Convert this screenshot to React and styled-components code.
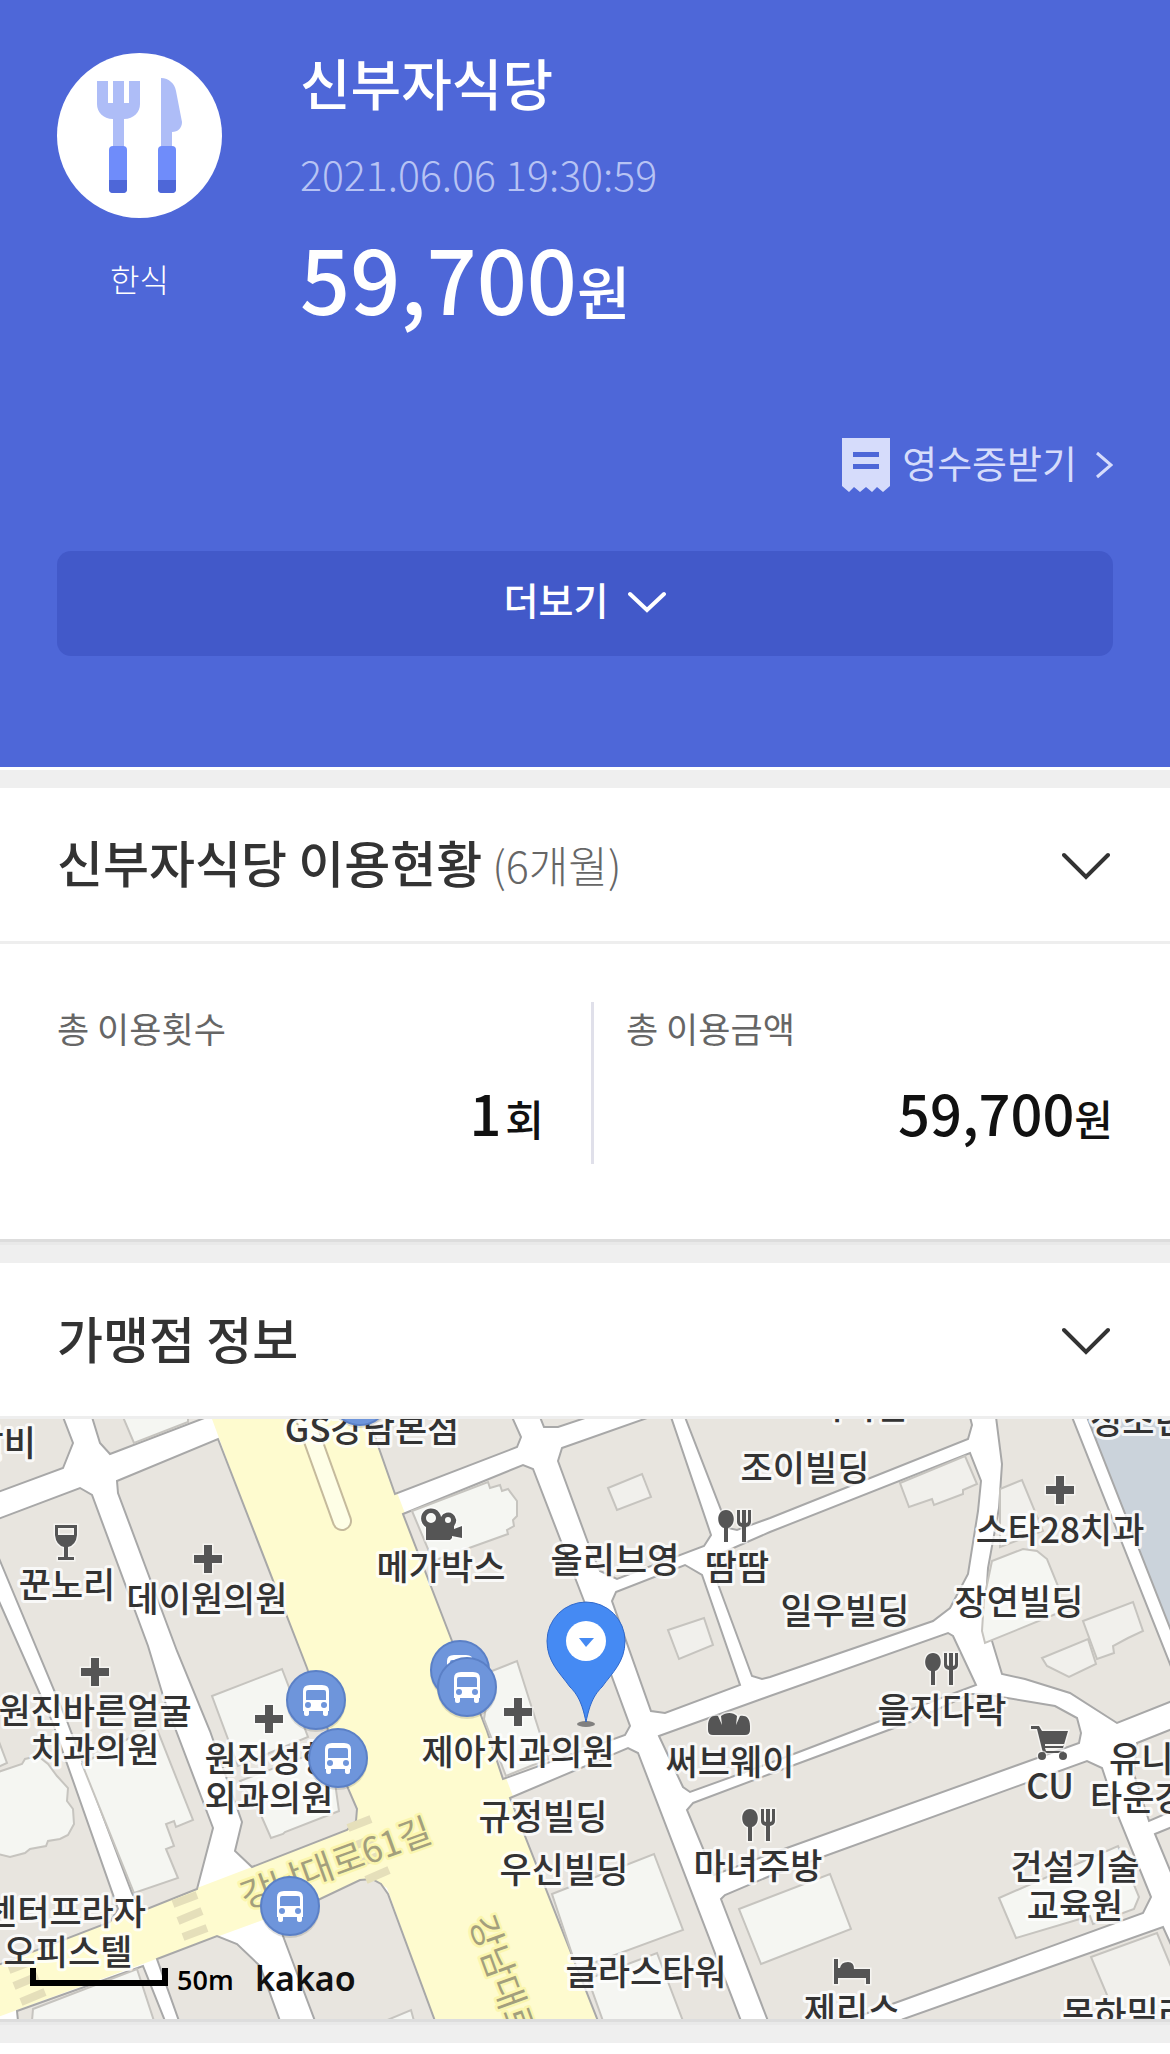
import React, { useState } from 'react';
import styled, { createGlobalStyle } from 'styled-components';

const GlobalStyle = createGlobalStyle`
  * {
    box-sizing: border-box;
  }

  body {
    margin: 0;
    background: #efefef;
    color: #333;
    font-family: 'Noto Sans CJK KR', 'Noto Sans', sans-serif;
  }

  h1, h2, p, dl, dt, dd {
    margin: 0;
  }

  button {
    padding: 0;
    border: 0;
    background: none;
    font-family: inherit;
    cursor: pointer;
  }
`;

/* ---------- payment summary ---------- */

const Hero = styled.header`
  margin-bottom: 18px;
  padding: 53px 57px 111px;
  border-bottom: 3px solid #fff;
  background: #4e67d8;
  color: #fff;
`;

const Summary = styled.div`
  display: flex;
  align-items: flex-start;
  gap: 78px;
`;

const Category = styled.div`
  display: flex;
  flex-direction: column;
  align-items: center;
  gap: 40px;
  font-size: 32px;
  font-weight: 300;
  line-height: 40px;
`;

const CategoryIcon = styled.div`
  width: 165px;
  height: 165px;
  border-radius: 50%;
  background: #fff;
`;

const Payment = styled.div`
  flex: 1;
`;

const StoreName = styled.h1`
  font-size: 55px;
  font-weight: 500;
  line-height: 56px;
`;

const PaidAt = styled.p`
  margin-top: 40px;
  color: #b7c3f4;
  font-size: 41px;
  font-weight: 300;
  line-height: 48px;
`;

const Amount = styled.p`
  height: 88px;
  margin-top: 36px;
  font-size: 88px;
  font-weight: 500;
  line-height: 88px;
`;

const Unit = styled.span`
  margin-left: ${({ $gap }) => $gap || 0}px;
  font-size: ${({ $size }) => $size}px;
  line-height: 1;
`;

const ReceiptRow = styled.div`
  display: flex;
  justify-content: flex-end;
  margin-top: 117px;
`;

const ReceiptLink = styled.a`
  display: flex;
  align-items: center;
  gap: 12px;
  height: 54px;
  color: #d6dcfb;
  font-size: 38px;
  line-height: 48px;
  text-decoration: none;

  svg:last-child {
    margin-left: 6px;
  }
`;

const ActionLabel = styled.span`
  padding-bottom: 6px;
`;

const MoreButton = styled.button`
  display: flex;
  justify-content: center;
  align-items: center;
  gap: 20px;
  width: 100%;
  height: 105px;
  margin-top: 59px;
  padding-bottom: 4px;
  border-radius: 14px;
  background: #4259c9;
  color: #fff;
  font-size: 38px;
  font-weight: 500;
`;

/* ---------- panels ---------- */

const Panel = styled.section`
  margin-bottom: 21px;
  border-bottom: 3px solid #ddd;
  background: #fff;
  box-shadow: 0 3px 0 #e9e9e9;
`;

const PanelHead = styled.div`
  display: flex;
  justify-content: space-between;
  align-items: center;
  height: 156px;
  padding: 0 60px 0 57px;
  border-bottom: 3px solid #eee;

  button {
    padding-top: 6px;
  }
`;

const PanelTitle = styled.h2`
  padding-bottom: 5px;
  font-size: 50px;
  font-weight: 500;
  line-height: 72px;
`;

const Period = styled.span`
  margin-left: 10px;
  color: #666;
  font-size: 43px;
  font-weight: 300;
`;

const NextPanel = styled.div`
  height: 13px;
  background: #fff;
`;

const Stats = styled.dl`
  display: flex;
  padding: 58px 57px 75px;
`;

const Stat = styled.div`
  flex: 1;
  min-height: 162px;
`;

const StatDivider = styled.div`
  width: 3px;
  margin: 0 32px 0 47px;
  background: #e0e0ea;
`;

const StatLabel = styled.dt`
  color: #666;
  font-size: 35px;
  line-height: 52px;
`;

const StatValue = styled.dd`
  margin-top: 18px;
  color: #111;
  font-size: 56px;
  font-weight: 500;
  line-height: 80px;
  text-align: right;
`;

/* ---------- map ---------- */

const MapView = styled.svg`
  display: block;
  width: 100%;
  height: 600px;
  background: #fff;
`;

const Block = styled.polygon`
  fill: #e8e5df;
  stroke: #a8a8a8;
  stroke-width: 2;
`;

const Building = styled.polygon`
  fill: ${({ $dim }) => ($dim ? '#f1f0ec' : '#f5f6f2')};
  stroke: #c6c4bf;
  stroke-width: 2;
`;

const PlaceLabel = styled.text`
  fill: #333;
  stroke: rgba(255, 255, 255, 0.8);
  stroke-width: 6px;
  stroke-linejoin: round;
  paint-order: stroke;
  font-size: 35px;
  font-weight: 500;
`;

const RoadLabel = styled.text`
  fill: #a39f7d;
  stroke: #fbf6ae;
  stroke-width: 5px;
  stroke-linejoin: round;
  paint-order: stroke;
  font-size: 35px;
`;

const ScaleLabel = styled.text`
  fill: #000;
  font-family: 'Open Sans', sans-serif;
  font-size: 27px;
  font-weight: 600;
`;

const MapLogo = styled.text`
  fill: #111;
  font-family: 'Noto Sans', sans-serif;
  font-size: 34px;
  font-weight: 600;
`;

const blocks = [
  '-2,-2 63,-2 73,24 63,49 -2,73',
  '92,-2 100,24 110,35 207,-2',
  '117,62 218,20 307,249 347,367 357,390 356,402 347,411 252,448 235,432 242,403 210,312 177,232 118,74',
  '-2,100 80,69 92,76 148,227 164,280 213,409 197,470 142,492 132,474 67,302 -2,137',
  '-2,180 52,302 118,490 110,503 -2,546',
  '17,592 143,547 165,602 18,602',
  '157,540 217,517 237,525 260,547 280,602 179,602',
  '278,500 360,461 372,460 381,465 388,475 435,602 315,602 283,517',
  '368,-2 512,-2 521,18 517,28 395,75',
  '403,95 523,46 533,50 584,182 630,307 625,316 503,360 487,312 452,222',
  '540,-2 544,8 558,8 588,-2',
  '562,29 650,-2 671,-2 711,116 704,127 617,160 600,152 590,129 558,42',
  '685,-2 728,109 737,111 770,99 968,20 972,6 970,-2',
  '616,173 685,146 702,156 740,266 665,294 651,292 612,182',
  '713,138 770,113 970,34 981,62 978,92 968,155 950,189 933,202 770,258 762,260 752,257 718,165',
  '996,-2 1002,45 999,89 988,149 985,199 992,222 1002,255 1025,260 1070,274 1117,304 1172,282 1172,250 1072,-2',
  '659,317 770,277 948,214 953,217 976,266 880,302 770,344 690,373 683,368',
  '693,384 770,355 913,302 970,275 983,275 1055,287 1077,299 1081,314 1079,324 770,435 714,456 687,391',
  '510,379 628,329 638,334 741,602 598,602',
  '721,480 725,476 770,457 1087,342 1102,349 1118,397 1151,478 1143,494 870,593 848,602 768,602',
  '898,602 1163,508 1172,528 1172,602',
  '1155,415 1172,408 1172,456',
  '1137,324 1172,310 1172,392 1149,402 1134,355',
];

const buildings = [
  '123,-2 134,24 188,3 188,-2',
  '212,277 282,250 308,318 238,347',
  '240,362 330,328 339,392 285,413 283,415 271,419 260,394',
  '82,345 155,305 193,401 176,408 174,402 166,405 174,427 166,430 178,459 134,474',
  '-2,353 22,345 25,340 38,337 48,345 57,357 68,369 67,382 73,390 74,405 68,416 60,420 48,422 46,427 30,430 25,434 10,438 -2,435',
  '-2,320 7,344 -2,348',
  '32,602 33,590 137,550 154,602',
  '385,602 411,591 414,602',
  '412,92 488,63 490,69 500,66 502,72 508,70 517,82 517,97 513,101 514,107 507,111 508,115 433,142',
  '492,252 517,242 548,340 506,357 484,300',
  '552,475 654,435 683,511 577,550',
  '588,560 657,534 683,602 603,602',
  '739,490 830,455 851,510 761,545',
  '992,142 1023,130 1037,132 1047,140 1060,172 1063,192 985,224 982,212 984,180',
  '999,479 1118,427 1139,478 1134,490 1093,505 1090,497 1016,519',
];

const dimBuildings = [
  '608,69 642,55 651,78 617,91',
  '668,211 704,199 713,226 679,240',
  '900,64 965,37 977,65 963,71 963,75 934,86 932,80 909,88',
  '1000,70 1022,61 1043,112 1000,128',
  '1083,202 1133,183 1143,212 1128,219 1113,227 1114,234 1097,240',
  '1042,239 1088,220 1096,245 1069,258 1047,247',
  '1091,538 1157,514 1172,550 1172,602 1118,602',
];

const places = [
  { name: '갈비', x: 36, y: 37, anchor: 'end' },
  { name: 'GS강남본점', x: 372, y: 23 },
  { name: '꾼노리', x: 67, y: 179 },
  { name: '데이원의원', x: 207, y: 193 },
  { name: '원진바른얼굴', x: 95, y: 305 },
  { name: '치과의원', x: 95, y: 344 },
  { name: '원진성형', x: 269, y: 353 },
  { name: '외과의원', x: 269, y: 392 },
  { name: '메가박스', x: 441, y: 161 },
  { name: '올리브영', x: 615, y: 154 },
  { name: '땀땀', x: 737, y: 161 },
  { name: '서이빌', x: 859, y: 0 },
  { name: '조이빌딩', x: 805, y: 62 },
  { name: '스타28치과', x: 1060, y: 124 },
  { name: '청소년', x: 1090, y: 15, anchor: 'start' },
  { name: '장연빌딩', x: 1019, y: 196 },
  { name: '일우빌딩', x: 845, y: 205 },
  { name: '을지다락', x: 942, y: 304 },
  { name: '제아치과의원', x: 518, y: 346 },
  { name: '규정빌딩', x: 543, y: 411 },
  { name: '우신빌딩', x: 564, y: 464 },
  { name: '글라스타워', x: 646, y: 566 },
  { name: '써브웨이', x: 730, y: 356 },
  { name: '마녀주방', x: 758, y: 460 },
  { name: 'CU', x: 1050, y: 380 },
  { name: '유니', x: 1109, y: 353, anchor: 'start' },
  { name: '타운강', x: 1090, y: 392, anchor: 'start' },
  { name: '건설기술', x: 1075, y: 461 },
  { name: '교육원', x: 1075, y: 500 },
  { name: '제리스', x: 852, y: 604 },
  { name: '목하밀라', x: 1062, y: 608, anchor: 'start' },
  { name: '센터프라자', x: 146, y: 506, anchor: 'end' },
  { name: '오피스텔', x: 68, y: 546 },
];

const hospitals = [[208, 140], [95, 253], [269, 300], [518, 293], [1060, 71]];
const restaurants = [[726, 100], [933, 243], [750, 399]];
const busStops = [[360, -23], [460, 251], [467, 268], [316, 281], [338, 339], [290, 487]];

const Chevron = ({ width = 48, height = 28, color = '#333', stroke = 4 }) => (
  <svg width={width} height={height} viewBox={`0 0 ${width} ${height}`} fill="none" aria-hidden="true">
    <path
      d={`M2 3 L${width / 2} ${height - 3} L${width - 2} 3`}
      stroke={color}
      strokeWidth={stroke}
      strokeLinecap="round"
    />
  </svg>
);

const Cutlery = () => (
  <svg width="165" height="165" viewBox="0 0 165 165" aria-hidden="true">
    <path
      fill="#aebdf7"
      d="M40 28H51V50H56V28H67V50H72V28H83V51C83 59 77 66 67 66V96H56V66C46 66 40 59 40 51Z"
    />
    <path fill="#aebdf7" d="M104 25C112 25 118 31 119 38L125 69C125 75 121 79 115 79V96H104Z" />
    <rect x="52" y="93" width="18" height="47" rx="4" fill="#6f8cfa" />
    <rect x="101" y="93" width="18" height="47" rx="4" fill="#6f8cfa" />
    <path fill="#4e67d8" d="M52 127H70V136Q70 140 66 140H56Q52 140 52 136Z" />
    <path fill="#4e67d8" d="M101 127H119V136Q119 140 115 140H105Q101 140 101 136Z" />
  </svg>
);

const ReceiptIcon = () => (
  <svg width="48" height="54" viewBox="0 0 48 54" aria-hidden="true">
    <path
      fill="#d6dcfb"
      fillRule="evenodd"
      d="M0 0H48V48L41 54L35 49L30 54L24 49L18 54L12 49L7 54L0 48ZM11 14V19H37V14ZM11 26V31H37V26Z"
    />
  </svg>
);

const BusStop = ({ x, y }) => (
  <g transform={`translate(${x} ${y})`}>
    <circle cy="2" r="30" fill="#000" opacity="0.12" />
    <circle r="29" fill="#6e95db" stroke="#5b80c6" strokeWidth="2" />
    <path
      fill="#fff"
      fillRule="evenodd"
      d="M-13 -9Q-13 -15 -6 -15H6Q13 -15 13 -9V11H12V14Q12 16 10 16Q7 16 7 14V11H-7V14Q-7 16 -10 16Q-12 16 -12 14V11H-13ZM-8 -10Q-10 -10 -10 -8V0H10V-8Q10 -10 8 -10Z"
    />
    <circle cx="-8" cy="5" r="3" fill="#6e95db" />
    <circle cx="8" cy="5" r="3" fill="#6e95db" />
  </g>
);

const StoreMap = () => (
  <MapView viewBox="0 0 1170 600" preserveAspectRatio="xMidYMid slice" role="img" aria-label="가맹점 위치">
    <polygon
      fill="#fefbcf"
      points="212,0 369,0 598,600 434,600 387,469 372,461 -2,598 -2,545 252,448 345,412 356,400 347,367"
    />
    {blocks.map((points) => <Block key={points} points={points} />)}
    {buildings.map((points) => <Building key={points} points={points} />)}
    {dimBuildings.map((points) => <Building $dim key={points} points={points} />)}
    <polygon fill="#cbd3db" stroke="#a8a8a8" strokeWidth="2" points="1087,-2 1172,214 1172,-2" />

    {/* traffic island and crossings */}
    <path d="M298 -20L342 102" stroke="#c5ba9c" strokeWidth="20" strokeLinecap="round" />
    <path d="M298 -20L342 102" stroke="#fefee6" strokeWidth="16" strokeLinecap="round" />
    <path
      d="M173 485L197 476M178 502L202 492M183 518L207 509M9 551L30 543M14 567L38 557M21 583L45 573M348 409L371 400M366 461L389 451M354 427L374 419M361 444L380 436"
      stroke="#e5dfba"
      strokeWidth="8"
    />

    <RoadLabel textAnchor="middle" transform="translate(340 456) rotate(-20)">강남대로61길</RoadLabel>
    <RoadLabel transform="translate(469 502) rotate(70)">강남대로</RoadLabel>

    {places.map(({ name, x, y, anchor = 'middle' }) => (
      <PlaceLabel key={name} x={x} y={y} textAnchor={anchor}>{name}</PlaceLabel>
    ))}

    <g fill="#555" stroke="#fff" strokeOpacity="0.6" strokeWidth="3" paintOrder="stroke">
      {hospitals.map(([x, y]) => (
        <path
          key={x}
          transform={`translate(${x} ${y})`}
          d="M-4 -14H4V-4H14V4H4V14H-4V4H-14V-4H-4Z"
        />
      ))}
      {restaurants.map(([x, y]) => (
        <path
          key={x}
          transform={`translate(${x} ${y})`}
          d="M0 -9C10 -9 10 7 2 9V23H-2V9C-10 7 -10 -9 0 -9ZM11 -9H14V2Q14 4 16 4V-9H20V4Q22 4 22 2V-9H25V3Q25 7 20 8V23H16V8Q11 7 11 3Z"
        />
      ))}
      {/* bar */}
      <path fillRule="evenodd" d="M55 106H77V116Q76 126 68 128V138H74V141H58V138H64V128Q56 126 55 116ZM58 109V116H74V109Z" />
      {/* cinema */}
      <path
        fillRule="evenodd"
        d="M426 121V108A10 10 0 1 1 441 98A8 8 0 1 1 454 107V110L462 107V119L452 117V119L450 121ZM436 99A5 5 0 1 0 426 99A5 5 0 1 0 436 99ZM451 101A3 3 0 1 0 445 101A3 3 0 1 0 451 101Z"
      />
      {/* bakery */}
      <path d="M708 307C708 299 712 296 718 297L722 306L721 297C726 293 733 293 737 297L736 306L740 297C746 296 750 299 750 307V311Q750 316 745 316H713Q708 316 708 311Z" />
      {/* mart */}
      <path
        fillRule="evenodd"
        d="M1031 307H1039L1042 312H1068L1063 329H1045L1046 332H1064V334H1043L1037 310H1031ZM1045 325V327H1064V325Z"
      />
      <circle cx="1042" cy="337" r="4" />
      <circle cx="1063" cy="337" r="4" />
      {/* hotel */}
      <path d="M834 540H838V549H840Q841 543 848 543Q854 543 854 550H870V565H866V559H838V565H834Z" />
    </g>

    {busStops.map(([x, y]) => <BusStop key={x} x={x} y={y} />)}

    {/* store pin */}
    <ellipse cx="586" cy="305" rx="9" ry="3" fill="#555" opacity="0.7" />
    <path
      d="M586 303C582 283 577 275 570 268C560 254 547 243 547 222A39 39 0 0 1 625 222C625 243 612 254 602 268C595 275 590 283 586 303Z"
      fill="#458af3"
      stroke="#2f68cb"
      strokeWidth="1"
    />
    <circle cx="586" cy="222" r="20" fill="#fff" />
    <path d="M579 219H594L586 228Z" fill="#458af3" />

    <path d="M33 549V564H165V549" fill="none" stroke="#000" strokeWidth="6" />
    <ScaleLabel x="177" y="571">50m</ScaleLabel>
    <MapLogo x="255" y="572">kakao</MapLogo>
  </MapView>
);

const App = () => {
  const [showUsage, setShowUsage] = useState(true);
  const [showStore, setShowStore] = useState(true);

  return (
    <>
      <GlobalStyle />
      <Hero>
        <Summary>
          <Category>
            <CategoryIcon><Cutlery /></CategoryIcon>
            <span>한식</span>
          </Category>
          <Payment>
            <StoreName>신부자식당</StoreName>
            <PaidAt>2021.06.06 19:30:59</PaidAt>
            <Amount>59,700<Unit $size={58}>원</Unit></Amount>
          </Payment>
        </Summary>
        <ReceiptRow>
          <ReceiptLink href="#receipt">
            <ReceiptIcon />
            <ActionLabel>영수증받기</ActionLabel>
            <svg width="18" height="28" viewBox="0 0 18 28" fill="none" aria-hidden="true">
              <path d="M2 2L16 14L2 26" stroke="#d6dcfb" strokeWidth="3" />
            </svg>
          </ReceiptLink>
        </ReceiptRow>
        <MoreButton type="button">
          <ActionLabel>더보기</ActionLabel>
          <Chevron width={38} height={22} color="#fff" />
        </MoreButton>
      </Hero>

      <Panel>
        <PanelHead>
          <PanelTitle>신부자식당 이용현황<Period>(6개월)</Period></PanelTitle>
          <button type="button" aria-label="이용현황 접기" onClick={() => setShowUsage(!showUsage)}>
            <Chevron />
          </button>
        </PanelHead>
        {showUsage && (
          <Stats>
            <Stat>
              <StatLabel>총 이용횟수</StatLabel>
              <StatValue>1<Unit $size={42} $gap={4}>회</Unit></StatValue>
            </Stat>
            <StatDivider />
            <Stat>
              <StatLabel>총 이용금액</StatLabel>
              <StatValue>59,700<Unit $size={42}>원</Unit></StatValue>
            </Stat>
          </Stats>
        )}
      </Panel>

      <Panel>
        <PanelHead>
          <PanelTitle>가맹점 정보</PanelTitle>
          <button type="button" aria-label="가맹점 정보 접기" onClick={() => setShowStore(!showStore)}>
            <Chevron />
          </button>
        </PanelHead>
        {showStore && <StoreMap />}
      </Panel>
      <NextPanel />
    </>
  );
};

export default App;
